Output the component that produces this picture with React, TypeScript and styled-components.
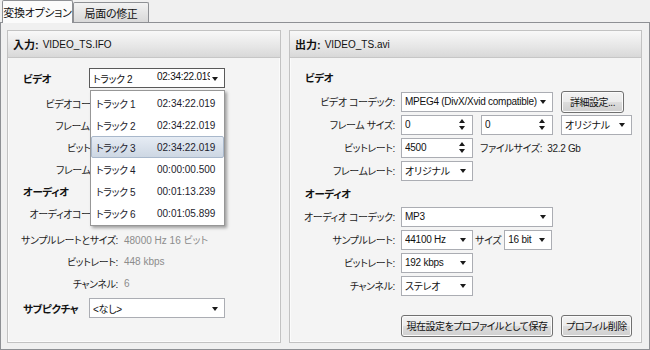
import { createGlobalStyle, styled } from 'styled-components';

const GlobalStyle = createGlobalStyle`
  html, body {
    margin: 0;
    padding: 0;
    background: #f0f0f0;
  }
  body {
    font-family: "Liberation Sans", "Noto Sans CJK JP", sans-serif;
    font-size: 10px;
    color: #1c1c1c;
    font-feature-settings: "palt";
  }
`;

const Window = styled.div`
  width: 650px;
  height: 350px;
  display: flex;
  flex-direction: column;
  background: #f0f0f0;
  overflow: hidden;
`;

const TabBar = styled.div`
  display: flex;
  align-items: flex-end;
  height: 22px;
  padding-left: 2px;
`;

const Tab = styled.div<{ $active?: boolean; $w: number }>`
  position: relative;
  z-index: ${p => (p.$active ? 2 : 1)};
  box-sizing: border-box;
  width: ${p => p.$w}px;
  height: ${p => (p.$active ? 23 : 20)}px;
  margin-bottom: ${p => (p.$active ? -1 : 0)}px;
  display: flex;
  align-items: center;
  justify-content: center;
  border: 1px solid #8e9094;
  border-bottom: none;
  border-radius: 2px 2px 0 0;
  background: ${p =>
    p.$active ? '#fbfbfb' : 'linear-gradient(#f3f3f3, #e5e5e5 50%, #d9d9d9)'};
  font-size: 11px;
  letter-spacing: -0.3px;
  white-space: nowrap;
  color: #111;
`;

const Panel = styled.div`
  flex: 1;
  box-sizing: border-box;
  display: flex;
  gap: 8px;
  padding: 7px 6px 6px 6px;
  border: 1px solid #8e9094;
  background: #f0f0f0;
`;

const Group = styled.div<{ $w: number }>`
  width: ${p => p.$w}px;
  box-sizing: border-box;
  display: flex;
  flex-direction: column;
  border: 1px solid #c2c2c2;
  background: #f4f4f4;
  box-shadow: inset 0 0 0 1px #fbfbfb;
`;

const GroupHeader = styled.div`
  height: 26px;
  display: flex;
  align-items: center;
  gap: 4px;
  padding-left: 5px;
  border-bottom: 1px solid #c6c6c6;
  background: linear-gradient(#f8f8f8, #e6e6e6 60%, #d8d8d8);
`;

const HeaderKey = styled.span`
  font-weight: bold;
  font-size: 11px;
  color: #111;
`;

const HeaderValue = styled.span`
  font-size: 10px;
  color: #111;
`;

const GroupBody = styled.div<{ $top: number }>`
  display: flex;
  flex-direction: column;
  padding: ${p => p.$top}px 0 0 15px;
`;

const Row = styled.div<{ $h: number; $mt?: number }>`
  height: ${p => p.$h}px;
  margin-top: ${p => p.$mt ?? 0}px;
  display: flex;
  align-items: center;
`;

const SectionTitle = styled.div<{ $w?: number }>`
  width: ${p => (p.$w ? `${p.$w}px` : 'auto')};
  flex-shrink: 0;
  font-weight: bold;
  font-size: 10.5px;
  letter-spacing: -0.4px;
  color: #111;
  white-space: nowrap;
`;

const FieldLabel = styled.div<{ $w: number }>`
  width: ${p => p.$w}px;
  flex-shrink: 0;
  display: flex;
  justify-content: flex-end;
  margin-right: 6px;
  letter-spacing: -0.4px;
  white-space: nowrap;
  color: #1c1c1c;
`;

const InfoValue = styled.span`
  color: #8c8c8c;
  white-space: nowrap;
`;

const PlainText = styled.span<{ $ml?: number; $mr?: number }>`
  margin-left: ${p => p.$ml ?? 0}px;
  margin-right: ${p => p.$mr ?? 0}px;
  letter-spacing: -0.3px;
  white-space: nowrap;
`;

const SelectBox = styled.div<{ $w: number; $focus?: boolean; $ml?: number }>`
  position: relative;
  flex-shrink: 0;
  box-sizing: border-box;
  width: ${p => p.$w}px;
  height: 20px;
  margin-left: ${p => p.$ml ?? 0}px;
  display: flex;
  align-items: center;
  padding-left: 3px;
  border: 1px solid ${p => (p.$focus ? '#5a5a5a' : '#abadb3')};
  background: #fff;
  color: #111;
`;

const SelectText = styled.span`
  flex: 1;
  min-width: 0;
  display: flex;
  overflow: hidden;
  letter-spacing: -0.25px;
  white-space: nowrap;
`;

const TrackName = styled.span<{ $w: number }>`
  display: inline-block;
  width: ${p => p.$w}px;
  flex-shrink: 0;
  letter-spacing: -0.4px;
`;

const Caret = styled.span`
  flex-shrink: 0;
  width: 0;
  height: 0;
  margin: 1px 6px 0 2px;
  border-left: 3.5px solid transparent;
  border-right: 3.5px solid transparent;
  border-top: 4px solid #1a1a1a;
`;

const Arrows = styled.span`
  display: flex;
  flex-direction: column;
  gap: 3px;
  margin-right: 7px;
`;

const ArrowUp = styled.span`
  width: 0;
  height: 0;
  border-left: 3.5px solid transparent;
  border-right: 3.5px solid transparent;
  border-bottom: 4px solid #1a1a1a;
`;

const ArrowDown = styled(ArrowUp)`
  border-bottom: none;
  border-top: 4px solid #1a1a1a;
`;

const Button = styled.div<{ $w: number; $ml?: number }>`
  flex-shrink: 0;
  box-sizing: border-box;
  width: ${p => p.$w}px;
  height: 22px;
  margin-left: ${p => p.$ml ?? 0}px;
  display: flex;
  align-items: center;
  justify-content: center;
  border: 1px solid #707070;
  border-radius: 3px;
  background: linear-gradient(#f2f2f2, #ebebeb 50%, #dddddd 50%, #cfcfcf);
  box-shadow: inset 0 0 0 1px #fbfbfb;
  letter-spacing: -0.5px;
  color: #111;
  white-space: nowrap;
`;

const Popup = styled.div`
  position: absolute;
  z-index: 10;
  left: 0;
  top: 21px;
  box-sizing: border-box;
  width: 135px;
  padding: 1px 0;
  border: 1px solid #979797;
  background: #fff;
  box-shadow: 2px 2px 3px rgba(0, 0, 0, 0.35);
`;

const PopupRow = styled.div<{ $selected?: boolean }>`
  box-sizing: border-box;
  height: 22px;
  display: flex;
  align-items: center;
  padding-left: 4px;
  border: 1px solid ${p => (p.$selected ? '#a9b8cb' : 'transparent')};
  border-radius: 2px;
  background: ${p => (p.$selected ? 'linear-gradient(#e6ecf4, #cdd7e3)' : 'transparent')};
  color: #1c1c2c;
  white-space: nowrap;
`;

const tracks = [
  { name: 'トラック 1', time: '02:34:22.019' },
  { name: 'トラック 2', time: '02:34:22.019' },
  { name: 'トラック 3', time: '02:34:22.019' },
  { name: 'トラック 4', time: '00:00:00.500' },
  { name: 'トラック 5', time: '00:01:13.239' },
  { name: 'トラック 6', time: '00:01:05.899' },
];

// these rows sit under the open track list
const coveredLabels = ['ビデオコーデック:', 'フレームサイズ:', 'ビットレート:', 'フレームレート:'];

function Select({ w, value, ml }: { w: number; value: string; ml?: number }) {
  return (
    <SelectBox $w={w} $ml={ml}>
      <SelectText>{value}</SelectText>
      <Caret />
    </SelectBox>
  );
}

function Spin({ w, value, ml }: { w: number; value: string; ml?: number }) {
  return (
    <SelectBox $w={w} $ml={ml}>
      <SelectText>{value}</SelectText>
      <Arrows>
        <ArrowUp />
        <ArrowDown />
      </Arrows>
    </SelectBox>
  );
}

function InputGroup() {
  return (
    <Group $w={274}>
      <GroupHeader>
        <HeaderKey>入力:</HeaderKey>
        <HeaderValue>VIDEO_TS.IFO</HeaderValue>
      </GroupHeader>
      <GroupBody $top={9}>
        <Row $h={22}>
          <SectionTitle $w={66}>ビデオ</SectionTitle>
          <SelectBox $w={136} $focus>
            <SelectText>
              <TrackName $w={64}>トラック 2</TrackName>
              02:34:22.019
            </SelectText>
            <Caret />
            <Popup>
              {tracks.map((t, i) => (
                <PopupRow key={t.name} $selected={i === 2}>
                  <TrackName $w={61}>{t.name}</TrackName>
                  {t.time}
                </PopupRow>
              ))}
            </Popup>
          </SelectBox>
        </Row>
        {coveredLabels.map((label, i) => (
          <Row key={label} $h={22} $mt={i === 0 ? 3 : 0}>
            <FieldLabel $w={95}>{label}</FieldLabel>
          </Row>
        ))}
        <Row $h={22}>
          <SectionTitle>オーディオ</SectionTitle>
        </Row>
        <Row $h={22}>
          <FieldLabel $w={95}>オーディオコーデック:</FieldLabel>
        </Row>
        <Row $h={22} $mt={4}>
          <FieldLabel $w={95}>サンプルレートとサイズ:</FieldLabel>
          <InfoValue>48000 Hz 16 ビット</InfoValue>
        </Row>
        <Row $h={22}>
          <FieldLabel $w={95}>ビットレート:</FieldLabel>
          <InfoValue>448 kbps</InfoValue>
        </Row>
        <Row $h={22}>
          <FieldLabel $w={95}>チャンネル:</FieldLabel>
          <InfoValue>6</InfoValue>
        </Row>
        <Row $h={22} $mt={3}>
          <SectionTitle $w={66}>サブピクチャ</SectionTitle>
          <Select w={136} value="<なし>" />
        </Row>
      </GroupBody>
    </Group>
  );
}

function OutputGroup() {
  return (
    <Group $w={353}>
      <GroupHeader>
        <HeaderKey>出力:</HeaderKey>
        <HeaderValue>VIDEO_TS.avi</HeaderValue>
      </GroupHeader>
      <GroupBody $top={8}>
        <Row $h={23}>
          <SectionTitle>ビデオ</SectionTitle>
        </Row>
        <Row $h={23} $mt={1}>
          <FieldLabel $w={90}>ビデオ コーデック:</FieldLabel>
          <Select w={152} value="MPEG4 (DivX/Xvid compatible)" />
          <Button $w={63} $ml={8}>詳細設定...</Button>
        </Row>
        <Row $h={23}>
          <FieldLabel $w={90}>フレーム サイズ:</FieldLabel>
          <Spin w={72} value="0" />
          <Spin w={72} value="0" ml={8} />
          <Select w={71} value="オリジナル" ml={8} />
        </Row>
        <Row $h={23}>
          <FieldLabel $w={90}>ビットレート:</FieldLabel>
          <Spin w={72} value="4500" />
          <PlainText $ml={7}>ファイルサイズ:&nbsp; 32.2 Gb</PlainText>
        </Row>
        <Row $h={23}>
          <FieldLabel $w={90}>フレームレート:</FieldLabel>
          <Select w={72} value="オリジナル" />
        </Row>
        <Row $h={23}>
          <SectionTitle>オーディオ</SectionTitle>
        </Row>
        <Row $h={23}>
          <FieldLabel $w={90}>オーディオ コーデック:</FieldLabel>
          <Select w={152} value="MP3" />
        </Row>
        <Row $h={23}>
          <FieldLabel $w={90}>サンプルレート:</FieldLabel>
          <Select w={72} value="44100 Hz" />
          <PlainText $ml={2} $mr={3}>サイズ</PlainText>
          <Select w={48} value="16 bit" />
        </Row>
        <Row $h={23}>
          <FieldLabel $w={90}>ビットレート:</FieldLabel>
          <Select w={72} value="192 kbps" />
        </Row>
        <Row $h={23}>
          <FieldLabel $w={90}>チャンネル:</FieldLabel>
          <Select w={72} value="ステレオ" />
        </Row>
        <Row $h={23} $mt={17}>
          <FieldLabel $w={90} />
          <Button $w={152}>現在設定をプロファイルとして保存</Button>
          <Button $w={71} $ml={8}>プロフィル削除</Button>
        </Row>
      </GroupBody>
    </Group>
  );
}

export default function App() {
  return (
    <>
      <GlobalStyle />
      <Window>
        <TabBar>
          <Tab $active $w={71}>変換オプション</Tab>
          <Tab $w={76}>局面の修正</Tab>
        </TabBar>
        <Panel>
          <InputGroup />
          <OutputGroup />
        </Panel>
      </Window>
    </>
  );
}
